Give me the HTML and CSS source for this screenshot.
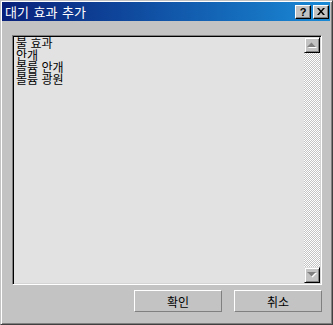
FILE: index.html
```html
<!DOCTYPE html>
<html lang="ko">
<head>
    <meta charset="utf-8">
    <title>대기 효과 추가</title>
    <link rel="stylesheet" href="styles.css">
</head>
<body>
    <div class="window">
        <div class="titlebar">
            <span class="title">대기 효과 추가</span>
            <div class="caption-buttons">
                <div class="cap-btn help">?</div>
                <div class="cap-btn close">
                    <svg width="8" height="7" viewBox="0 0 8 7">
                        <path d="M0 0h2l2 2.5L6 0h2L5 3.5 8 7H6L4 4.5 2 7H0l3-3.5z" fill="#000"/>
                    </svg>
                </div>
            </div>
        </div>
        <div class="content">
            <div class="listbox">
                <ul class="items">
                    <li>불 효과</li>
                    <li>안개</li>
                    <li>볼륨 안개</li>
                    <li>볼륨 광원</li>
                </ul>
                <div class="scrollbar">
                    <div class="sb-btn">
                        <svg width="10" height="6" viewBox="0 0 10 6">
                            <path d="M1 6h9L5.5 1.5z" fill="#fff"/>
                            <path d="M0 5h9L4.5 0.5z" fill="#808080"/>
                        </svg>
                    </div>
                    <div class="sb-track"></div>
                    <div class="sb-btn">
                        <svg width="10" height="6" viewBox="0 0 10 6">
                            <path d="M1 1h9L5.5 5.5z" fill="#fff"/>
                            <path d="M0 0h9L4.5 4.5z" fill="#808080"/>
                        </svg>
                    </div>
                </div>
            </div>
            <div class="actions">
                <button class="btn">확인</button>
                <button class="btn">취소</button>
            </div>
        </div>
    </div>
</body>
</html>
```

FILE: styles.css
```css
body {
    margin: 0;
    font-family: "Noto Sans CJK KR", "Noto Sans", sans-serif;
    font-size: 12px;
    background-color: #c3c3c3;
}

.window {
    width: 333px;
    height: 325px;
    box-sizing: border-box;
    background-color: #c3c3c3;
    border: 1px solid;
    border-color: #c3c3c3 #404040 #404040 #c3c3c3;
    box-shadow: inset 1px 1px #fff, inset -1px -1px #808080;
    padding: 1px 2px 1px 1px;
    display: flex;
    flex-direction: column;
}

.titlebar {
    height: 19px;
    background: linear-gradient(to right, #08207a, #1a8ad6);
    display: flex;
    align-items: center;
    justify-content: space-between;
    padding: 0 1px 0 3px;
}

.title {
    color: #fff;
    font-size: 13px;
    line-height: 19px;
    word-spacing: 1px;
}

.caption-buttons {
    display: flex;
    gap: 2px;
}

.cap-btn {
    width: 16px;
    height: 14px;
    box-sizing: border-box;
    background-color: #c3c3c3;
    border: 1px solid;
    border-color: #fff #000 #000 #fff;
    box-shadow: inset -1px -1px #808080;
    display: flex;
    align-items: center;
    justify-content: center;
}

.help {
    font-family: "Liberation Sans", sans-serif;
    font-weight: bold;
    font-size: 11px;
    line-height: 12px;
    color: #000;
}

.content {
    flex: 1;
    display: flex;
    flex-direction: column;
    padding: 14px 0 0 10px;
}

.listbox {
    width: 310px;
    height: 250px;
    box-sizing: border-box;
    border: 1px solid;
    border-color: #808080 #fff #fff #808080;
    box-shadow: inset 1px 1px #000, inset -1px -1px #d4d4d4;
    padding: 1px;
    background-color: #e2e2e2;
    display: flex;
}

.items {
    flex: 1;
    list-style: none;
    margin: 0;
    padding: 0 0 0 2px;
}

.items li {
    height: 12px;
    font-size: 12px;
    line-height: 12px;
    color: #000;
}

.scrollbar {
    width: 16px;
    display: flex;
    flex-direction: column;
}

.sb-btn {
    height: 16px;
    box-sizing: border-box;
    background-color: #c3c3c3;
    border: 1px solid;
    border-color: #dfdfdf #000 #000 #dfdfdf;
    box-shadow: inset 1px 1px #fff, inset -1px -1px #808080;
    display: flex;
    align-items: center;
    justify-content: center;
}

.sb-track {
    flex: 1;
    background: repeating-conic-gradient(#fff 0 25%, #c3c3c3 0 50%) 0 0 / 2px 2px;
}

.actions {
    display: flex;
    justify-content: flex-end;
    gap: 12px;
    padding: 5px 8px 0 0;
}

.btn {
    width: 88px;
    height: 22px;
    font-family: inherit;
    font-size: 12px;
    color: #000;
    background-color: #c3c3c3;
    border: 1px solid;
    border-color: #fff #808080 #808080 #fff;
    padding: 0;
}
```
